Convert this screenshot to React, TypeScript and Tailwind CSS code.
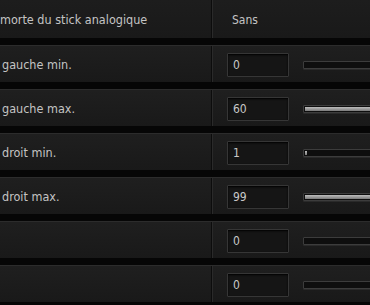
const rows = [
  { label: "gauche min.", value: "0", fill: 0 },
  { label: "gauche max.", value: "60", fill: 100 },
  { label: "droit min.", value: "1", fill: 3 },
  { label: "droit max.", value: "99", fill: 100 },
  { label: "", value: "0", fill: 0 },
  { label: "", value: "0", fill: 0 },
];

const font = { fontFamily: '"DejaVu Sans Condensed", "DejaVu Sans", sans-serif' };

function Slider({ fill }: { fill: number }) {
  return (
    <div className="ml-[14px] h-[8px] flex-1 -mr-[20px] rounded-[1px] border border-[#3c3c3c] bg-[#0e0e0e] p-[1px] shadow-[0_1px_0_#2a2a2a]">
      <div
        className="h-full bg-gradient-to-b from-[#bdbdbd] to-[#7a7a7a]"
        style={{ width: fill === 0 ? 0 : fill < 10 ? "2px" : `${fill}%` }}
      />
    </div>
  );
}

function Row({ label, value, fill }: { label: string; value: string; fill: number }) {
  return (
    <div className="flex h-[37px] border-t border-[#2c2c2c] bg-gradient-to-b from-[#1f1f1f] to-[#191919]">
      <div className="flex w-[212px] items-center border-r border-[#0c0c0c] pl-[2px] pt-[2px] text-[12.5px] text-[#c4c4c4]" style={font}>
        {label}
      </div>
      <div className="flex flex-1 items-center overflow-hidden border-l border-[#2a2a2a] pl-[14px] pt-[1px]">
        <div className="flex h-[24px] w-[62px] items-center rounded-[1px] border border-[#363636] bg-[#151515] pl-[5px] text-[12px] text-[#c8c8c8] shadow-[inset_0_1px_2px_#000]" style={font}>
          {value}
        </div>
        <Slider fill={fill} />
      </div>
    </div>
  );
}

export default function App() {
  return (
    <div className="h-[305px] w-[370px] overflow-hidden bg-[#060606]">
      <div className="flex h-[38px] bg-gradient-to-b from-[#1d1d1d] to-[#191919]">
        <div className="flex w-[212px] items-center overflow-hidden border-r border-[#0c0c0c] pt-[2px] text-[12.5px] text-[#c4c4c4]" style={font}>
          <span className="whitespace-nowrap">morte du stick analogique</span>
        </div>
        <div className="flex flex-1 items-center border-l border-[#2a2a2a] pl-[19px] pt-[2px] text-[12px] text-[#c4c4c4]" style={font}>
          Sans
        </div>
      </div>
      <div className="flex flex-col gap-[7px] pt-[7px]">
        {rows.map((r, i) => (
          <Row key={i} {...r} />
        ))}
      </div>
    </div>
  );
}
